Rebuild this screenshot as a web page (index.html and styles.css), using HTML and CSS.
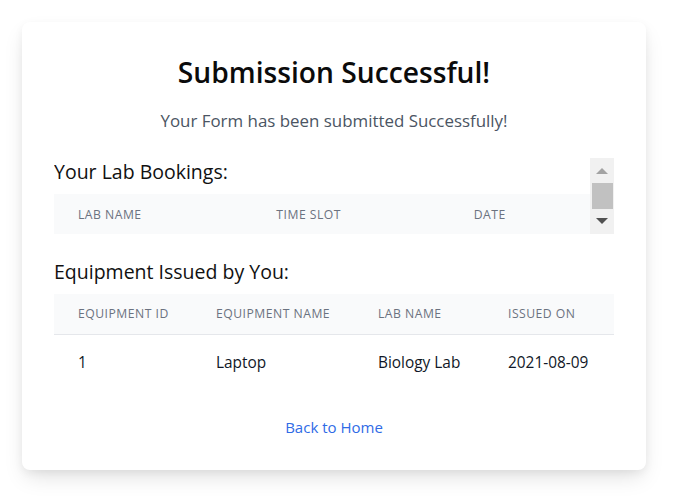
FILE: index.html
```html
<!DOCTYPE html>
<html lang="en">
<head>
<meta charset="utf-8">
<title>Submission Successful</title>
<link rel="stylesheet" href="styles.css">
</head>
<body>
<main class="page">
  <section class="card">
    <h1 class="title">Submission Successful!</h1>
    <p class="subtitle">Your Form has been submitted Successfully!</p>

    <div class="scroll-box">
      <div class="scroll-content">
        <h2 class="section-title">Your Lab Bookings:</h2>
        <table class="data-table bookings">
          <thead>
            <tr>
              <th class="bk-c1">Lab Name</th>
              <th class="bk-c2">Time Slot</th>
              <th class="bk-c3">Date</th>
            </tr>
          </thead>
        </table>
      </div>
      <div class="scrollbar" aria-hidden="true">
        <span class="arrow arrow-up"></span>
        <span class="thumb"></span>
        <span class="arrow arrow-down"></span>
      </div>
    </div>

    <h2 class="section-title equip-title">Equipment Issued by You:</h2>
    <table class="data-table equipment">
      <thead>
        <tr>
          <th class="eq-c1">Equipment ID</th>
          <th class="eq-c2">Equipment Name</th>
          <th class="eq-c3">Lab Name</th>
          <th class="eq-c4">Issued On</th>
        </tr>
      </thead>
      <tbody>
        <tr>
          <td>1</td>
          <td>Laptop</td>
          <td>Biology Lab</td>
          <td>2021-08-09</td>
        </tr>
      </tbody>
    </table>

    <div class="back">
      <a href="#" class="back-link">Back to Home</a>
    </div>
  </section>
</main>
</body>
</html>
```

FILE: styles.css
```css
* { box-sizing: border-box; }

html, body {
  margin: 0;
  padding: 0;
  background: #ffffff;
}

body {
  font-family: "Open Sans", "Noto Sans", "DejaVu Sans", sans-serif;
  color: #111827;
}

.page {
  padding: 22px 40px 28px 22px;
}

.card {
  width: 624px;
  background: #ffffff;
  border-radius: 8px;
  padding: 32px 32px 31px;
  box-shadow: 0 10px 22px -4px rgba(0, 0, 0, 0.13), 0 3px 8px rgba(0, 0, 0, 0.05);
}

.title {
  margin: 0;
  text-align: center;
  font-size: 28.2px;
  line-height: 36px;
  font-weight: 600;
  color: #0b0b0b;
}

.subtitle {
  margin: 17px 0 0;
  text-align: center;
  font-size: 16.9px;
  line-height: 28px;
  color: #4b5563;
}

.scroll-box {
  margin-top: 23px;
  height: 76px;
  display: flex;
  overflow: hidden;
}

.scroll-content {
  flex: 1;
  min-width: 0;
}

.section-title {
  margin: 0 0 8px;
  font-size: 19.5px;
  line-height: 28px;
  font-weight: 400;
  color: #111111;
}

.equip-title {
  margin-top: 24px;
}

.scrollbar {
  width: 24px;
  flex: none;
  background: #f1f1f1;
  display: flex;
  flex-direction: column;
  align-items: center;
}

.arrow {
  width: 0;
  height: 0;
  border-left: 6px solid transparent;
  border-right: 6px solid transparent;
}

.arrow-up {
  margin-top: 10px;
  border-bottom: 6px solid #a3a3a3;
}

.thumb {
  margin-top: 9px;
  width: 21px;
  height: 26px;
  background: #c1c1c1;
}

.arrow-down {
  margin-top: 9px;
  border-top: 6px solid #505050;
}

.data-table {
  width: 100%;
  border-collapse: collapse;
  table-layout: fixed;
}

.data-table th {
  background: #f9fafb;
  height: 40px;
  padding: 0 0 0 24px;
  text-align: left;
  font-size: 12.2px;
  font-weight: 500;
  letter-spacing: 0.04em;
  text-transform: uppercase;
  color: #6b7280;
  white-space: nowrap;
}

.equipment thead th {
  border-bottom: 1px solid #e5e7eb;
}

.data-table td {
  padding: 16px 0 16px 24px;
  font-size: 15.4px;
  line-height: 24px;
  color: #111827;
  white-space: nowrap;
}

.bk-c1 { width: 198px; }
.bk-c2 { width: 197px; }
.bk-c3 { width: 140px; }

.eq-c1 { width: 138px; }
.eq-c2 { width: 162px; }
.eq-c3 { width: 130px; }
.eq-c4 { width: 130px; }

.back {
  margin-top: 24px;
  text-align: center;
  line-height: 24px;
}

.back-link {
  font-size: 15px;
  color: #2f6be6;
  text-decoration: none;
}
```
